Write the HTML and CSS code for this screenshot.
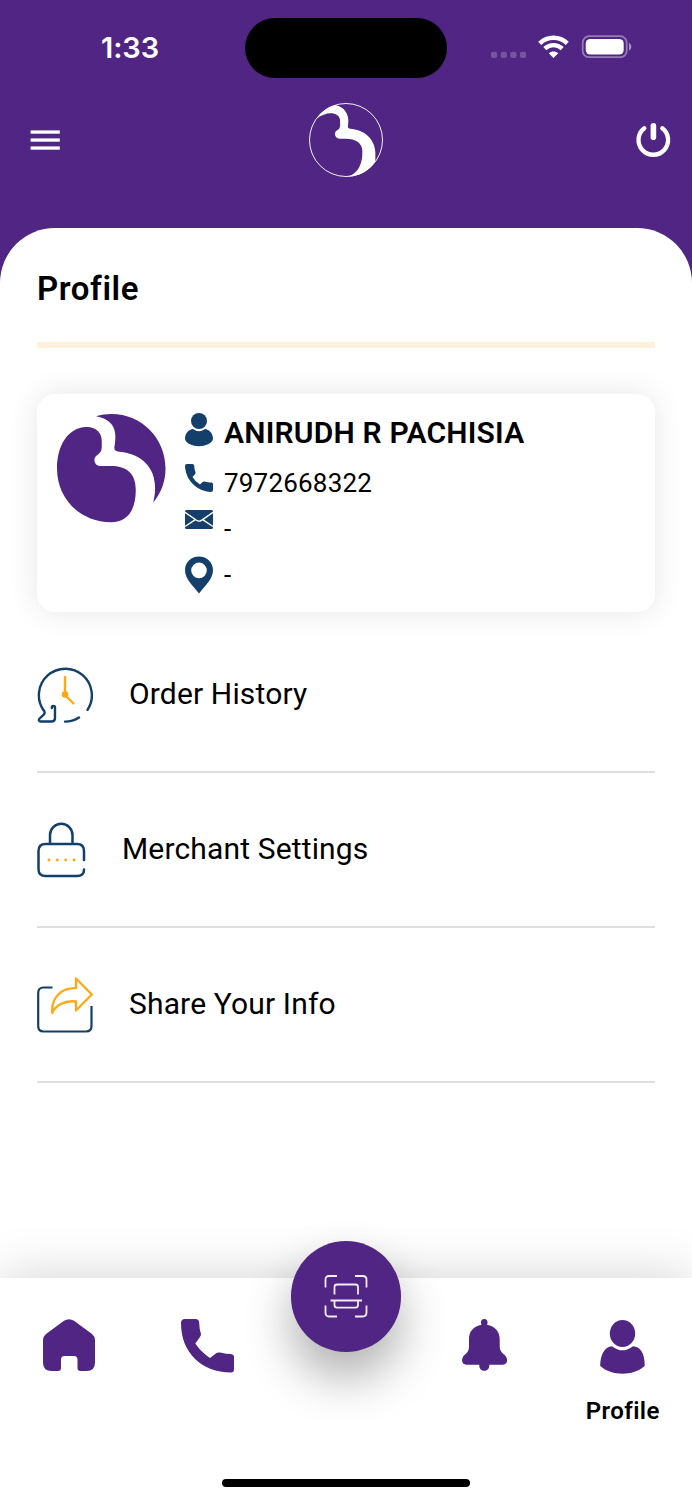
FILE: index.html
```html
<!DOCTYPE html>
<html lang="en">
<head>
<meta charset="utf-8">
<title>Profile</title>
<link rel="stylesheet" href="styles.css">
</head>
<body>
<div class="screen">
  <div class="status">
    <div class="time">1:33</div>
    <div class="island"></div>
    <svg class="signals" width="142" height="24" viewBox="0 0 142 24">
      <g fill="#fff" fill-opacity=".22">
        <rect x="1" y="16.700" width="6.200" height="6.200" rx="2"/><rect x="10.700" y="16.700" width="6.200" height="6.200" rx="2"/><rect x="20.300" y="16.700" width="6.200" height="6.200" rx="2"/><rect x="29.900" y="16.700" width="6.200" height="6.200" rx="2"/>
      </g>
      <g fill="none" stroke="#fff" stroke-width="4.400">
        <path d="M49.700 8.300C57.500 0.900 69.500 0.900 77.300 8.300"/>
        <path d="M54.800 13.700C60 8.900 67 8.900 72.200 13.700"/>
      </g>
      <path fill="#fff" d="M63.500 22.900L58.800 18.300C61.400 15.900 65.600 15.900 68.200 18.300Z"/>
      <rect x="92.700" y="1.200" width="44" height="21" rx="6.500" fill="none" stroke="#fff" stroke-opacity=".4" stroke-width="1.800"/>
      <rect x="95.700" y="3.900" width="38" height="15.600" rx="4.500" fill="#fff"/>
      <path d="M139 8C142 9 142 14.500 139 15.500Z" fill="#fff" fill-opacity=".5"/>
    </svg>
  </div>
  <header class="header">
    <svg class="menu-icon" width="30" height="20" viewBox="0 0 30 20" fill="#fff"><rect x=".6" y=".4" width="29.200" height="3.300"/><rect x=".6" y="8.400" width="29.200" height="3.300"/><rect x=".6" y="16.400" width="29.200" height="3.300"/></svg>
    <svg width="76" height="76" viewBox="54 36 228 228">
      <circle cx="168" cy="150" r="109.500" fill="none" stroke="#fff" stroke-width="2.800"/>
      <path fill="#fff" d="M80 86C96 64 114 50 137 46C163 51 176 72 175 94C175 106 170 115 180 116C220 118 254 145 256 185V214C240 239 213 260 172 260C207 250 218 218 217 182C216 157 196 147 168 146H148C132 144 131 124 143 120C153 114 150 102 150 89C147 64 107 63 80 86Z"/>
    </svg>
    <svg width="36" height="36" viewBox="0 0 36 36" fill="none" stroke="#fff" stroke-linecap="round">
      <path stroke-width="4.300" d="M9.300 6.200A14.800 14.800 0 1 0 27.300 6.200"/>
      <path stroke-width="5.600" d="M18.400 3.800V15.300"/>
    </svg>
  </header>

  <main class="sheet">
    <h1 class="title">Profile</h1>
    <section class="card">
      <svg class="avatar" width="108.500" height="108.500" viewBox="81 87 325 325" fill="#502583">
        <path d="M168 126C200 125 215 145 215 167V184C215 199 209 204 200 211C188 219 192 240 209 243H240C292 243 317 266 317 315C317 378 290 411 243 411C150 411 81 340 81 250C81 180 115 128 168 126Z"/>
        <path d="M198 94C213 89 228 87 244 87C335 87 406 160 406 250C406 290 392 325 369 352C374 332 376 317 374 296C370 238 325 204 263 199C253 198 251 190 254 180C262 135 249 103 198 94Z"/>
      </svg>
      <div class="info">
        <div class="row row-name">
          <svg width="28" height="34" viewBox="0 0 28 34"><circle cx="14" cy="8" r="8"/><path d="M0 26C0 20 4 16.500 8 16Q14 20.500 20 16C24 16.500 28 20 28 26C26 35.500 2 35.500 0 26Z"/></svg>
          <span class="name">ANIRUDH R PACHISIA</span>
        </div>
        <div class="row">
          <svg width="28" height="28" viewBox="0 0 28 28"><path d="M2 0H7.500Q9 0 9.200 1.600C9.400 4 9.700 6 10.500 8.400Q10.800 9.500 9.800 10.500L7.500 13Q10 17.500 15 20.500L17.600 18Q18.500 17.200 19.500 17.500C22 18.200 24 18.500 26.500 18.600Q28 18.800 28 20.200V26Q28 28 26 28C12 27.500 .5 16 0 2Q0 0 2 0Z"/></svg>
          <span class="phone">7972668322</span>
        </div>
        <div class="row">
          <svg width="28" height="19" viewBox="0 0 28 19"><rect width="28" height="19" rx="1.500"/><path d="M0 2.300L11.500 10.300Q14 12 16.500 10.300L28 2.300M0 16.500L10 9.800M28 16.500L18 9.800" fill="none" stroke="#fff" stroke-width="1.400"/></svg>
          <span>-</span>
        </div>
        <div class="row">
          <svg width="28" height="38" viewBox="0 0 28 38"><path fill-rule="evenodd" d="M14 .5C6 .5 0 6.600 0 14C0 23 7.500 29 14 37.500C20.500 29 28 23 28 14C28 6.600 22 .5 14 .5ZM14 6.600A7.800 7.800 0 1 1 14 22.200A7.800 7.800 0 1 1 14 6.600Z"/></svg>
          <span>-</span>
        </div>
      </div>
    </section>

    <nav class="links">
      <a class="link">
        <svg width="56" height="56" viewBox="0 0 56 56" fill="none" stroke="#143f6b" stroke-width="2.400" stroke-linecap="round" stroke-linejoin="round">
          <path d="M50.500 42.800A26.500 26.500 0 1 0 6.500 43.200C8 44.700 8 46.500 6.500 47.800L2.600 51.500C1.200 53 2 54.500 3.800 54.500H14.500Q18 54.500 18 51V40.500Q18 39 16.500 39Q14.800 39 14.800 41M28 54.600Q35.500 54.600 42 50.400"/>
          <path stroke="#fcaa14" d="M28 10V28L36.500 36.500"/><circle cx="28" cy="27.500" r="3.300" fill="#fcaa14" stroke="none"/>
        </svg><span>Order History</span>
      </a>
      <a class="link">
        <svg width="49" height="56" viewBox="0 0 49 56" fill="none" stroke="#143f6b" stroke-width="2.500" stroke-linecap="round">
          <path d="M13 21V13A11.200 11.200 0 0 1 35.500 13V21M47 38V29Q47 22 40 22H8.500Q1.500 22 1.500 29V47Q1.500 54 8.500 54H40Q47 54 47 47.500"/>
          <g fill="#fcaa14" stroke="none"><circle cx="12" cy="38" r="1.450"/><circle cx="20.300" cy="38" r="1.450"/><circle cx="28.700" cy="38" r="1.450"/><circle cx="37" cy="38" r="1.450"/></g>
        </svg><span>Merchant Settings</span>
      </a>
      <a class="link">
        <svg width="56" height="56" viewBox="0 0 56 56" fill="none" stroke="#143f6b" stroke-width="2.200">
          <path d="M15.500 10.500H6.500Q1.200 10.500 1.200 16V49Q1.200 54.500 6.500 54.500H49Q54.500 54.500 54.500 49V29"/>
          <path stroke="#fcaa14" stroke-width="2.300" stroke-linejoin="round" d="M39 1.500L54.800 17.500L39 33.500V24.500C27 23 18 29 15.300 36C14 21 24 10.500 39 11.200Z"/>
        </svg><span>Share Your Info</span>
      </a>
    </nav>
  </main>

  <footer class="tabs">
    <div class="tab"><svg width="52" height="52" viewBox="0 0 52 52"><path d="M21 1.800Q26 -1.500 31 1.800L49 15Q52 17.500 52 21V43.500Q52 52 43.500 52H37.500Q34.500 52 34.500 49V40.500Q34.500 37 31 37H21.500Q18 37 18 40.500V49Q18 52 15 52H8.500Q0 52 0 43.500V21Q0 17.500 3 15Z"/></svg></div>
    <div class="tab"><svg width="53" height="54" viewBox="0 0 53 54"><path d="M4 0H14.500Q18 0 18.200 4L18.700 10L20 15Q20 16.500 19 18L14.300 24.500Q20 33 29 39L35.500 34Q37 33 39 33.600L45 34.800L50 35Q53 35.500 53 38V50Q53 53.500 50 53.500C21 53.500 0 34 0 4Q0 0 4 0Z"/></svg></div>
    <div class="tab tab-scan">
      <button class="scan" aria-label="Scan"><svg width="44" height="44" viewBox="0 0 44 44" fill="none" stroke="#f3ecff" stroke-width="1.800">
        <path d="M1.500 13.500V5.500Q1.500 2 5 2H13M31 2H38.500Q42.500 2 42.500 5.500V13.500M42.500 31.500V38.500Q42.500 42.500 38.500 42.500H31M13 42.500H5Q1.500 42.500 1.500 38.500V31.500M10.500 20.500V13Q10.500 10.500 13 10.500H31.500Q34 10.500 34 13V20.500M10.500 26.500V31Q10.500 33.700 13 33.700H31.500Q34 33.700 34 31V26.500M6.500 26.500H38"/></svg></button>
    </div>
    <div class="tab"><svg width="45" height="52" viewBox="0 0 45 52"><path d="M22.300 0C25.500 0 26.200 3 25 5.700C33 7 37.700 13 37.700 20V27C37.700 31 39 33 42 35.500C47 39.500 45.500 45.800 40.500 45.800H27.300C28 53.800 16.600 53.800 17.300 45.800H4.500C-1 45.800 -1 39 2.500 36C6 33 7 31 7 27V20C7 12 12 7 19.500 5.700C18.300 3 19.100 0 22.300 0Z"/></svg></div>
    <div class="tab"><svg class="user-icon" width="45" height="54" viewBox="0 0 45 54"><ellipse cx="22.500" cy="13.500" rx="12.700" ry="13.500"/><path d="M12 26.200Q22.500 34.500 33 26.200C40 26.500 45 33 44.700 46C33 56.300 12 56.300 .2 46C.3 35 4.500 26.500 12 26.200Z"/></svg><span>Profile</span></div>
    <div class="home-bar"></div>
  </footer>
</div>
</body>
</html>
```
FILE: styles.css
```css
* { box-sizing: border-box; }
body { margin: 0; background: #502583; font-family: Roboto, "Liberation Sans", sans-serif; color: #000; }
.screen { width: 692px; height: 1500px; display: flex; flex-direction: column; overflow: hidden; }
svg { display: block; flex: none; }

.status { height: 96px; padding: 18px 60px 0 101px; display: flex; align-items: flex-start; }
.time { width: 144px; margin-top: 12px; font: 600 29px/36px Inter, sans-serif; letter-spacing: -.1px; color: #fff; white-space: nowrap; }
.island { width: 202px; height: 60px; border-radius: 30px; background: #000; }
.signals { margin: 17px 0 0 43px; }

.header { height: 132px; padding: 0 21px 44px 30px; display: grid; grid-template-columns: 278px 1fr auto; align-items: center; }

.sheet { flex: 1; padding: 38px 37px 0; border-radius: 55px 55px 0 0; background: #fff; }
.title { margin: 0; height: 82px; border-bottom: 6px solid #fff1da; font-size: 33px; line-height: 46px; font-weight: 600; letter-spacing: .6px; }
.card { height: 218px; margin-top: 46px; padding: 19px 20px; display: flex; gap: 19px; border-radius: 18px; background: #fff; box-shadow: 0 0 30px rgba(0,0,0,.1); }
.avatar { margin-top: 1px; }
.info { flex: 1; }
.row { height: 46px; display: flex; align-items: flex-start; gap: 11.500px; fill: #143f6b; font-size: 26px; line-height: 38px; }
.row-name { height: 51px; line-height: 40px; }
.name { font-size: 30px; font-weight: 600; letter-spacing: .2px; white-space: nowrap; }
.phone { letter-spacing: .2px; }

.links { margin-top: 6px; }
.link { height: 155px; display: flex; align-items: center; gap: 36px; border-bottom: 2px solid #dfdfdf; font-size: 30px; letter-spacing: .15px; }
.link span { padding-bottom: 2px; }

.tabs { position: relative; height: 222px; padding-top: 41px; display: grid; grid-template-columns: repeat(5, 1fr); align-items: start; background: #fff; box-shadow: 0 0 50px rgba(0,0,0,.18); }
.tab { display: flex; flex-direction: column; align-items: center; gap: 18px; fill: #502583; font-size: 24px; line-height: 38px; font-weight: 600; letter-spacing: .4px; }
.tab-scan { margin-top: -78px; }
.scan { width: 110.500px; height: 110.500px; padding: 0; border: 0; border-radius: 50%; background: #502583; display: grid; place-items: center; box-shadow: 0 26px 48px rgba(0,0,0,.31); }
.user-icon { margin-top: 1px; }
.home-bar { position: absolute; left: 222px; bottom: 13px; width: 248px; height: 8px; border-radius: 4px; background: #000; }
```
